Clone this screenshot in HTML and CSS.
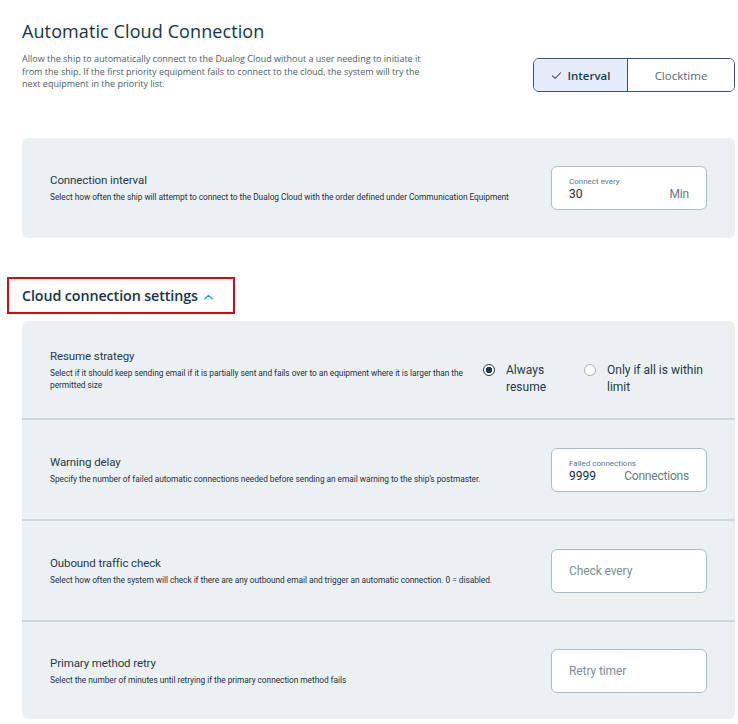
FILE: index.html
```html
<!DOCTYPE html>
<html lang="en">
<head>
<meta charset="utf-8">
<link rel="stylesheet" href="styles.css">
</head>
<body>
<div class="page">
  <header class="intro">
    <div class="intro-text">
      <h1 class="title">Automatic Cloud Connection</h1>
      <p class="lead">Allow the ship to automatically connect to the Dualog Cloud without a user needing to initiate it from the ship. If the first priority equipment fails to connect to the cloud, the system will try the next equipment in the priority list.</p>
    </div>
    <div class="toggle">
      <button class="seg seg-active">
        <svg class="check" viewBox="0 0 12 12" width="11" height="11"><path d="M1.5 6.3 L4.6 9.2 L10.5 3" fill="none" stroke="#2d4a5c" stroke-width="1.1" stroke-linecap="round" stroke-linejoin="round"/></svg>
        Interval
      </button>
      <button class="seg">Clocktime</button>
    </div>
  </header>

  <section class="panel">
    <div class="row">
      <div class="row-text">
        <div class="row-title">Connection interval</div>
        <div class="row-desc">Select how often the ship will attempt to connect to the Dualog Cloud with the order defined under Communication Equipment</div>
      </div>
      <div class="field">
        <div class="field-label">Connect every</div>
        <div class="field-line"><span class="field-value">30</span><span class="field-unit">Min</span></div>
      </div>
    </div>
  </section>

  <div class="section-head">
    <h2 class="section-title">Cloud connection settings</h2>
    <svg class="chev" viewBox="0 0 10 6" width="9" height="6"><path d="M1 5 L5 1.2 L9 5" fill="none" stroke="#1aa39a" stroke-width="1.4" stroke-linecap="round" stroke-linejoin="round"/></svg>
  </div>

  <section class="panel panel-list">
    <div class="row">
      <div class="row-text narrow">
        <div class="row-title">Resume strategy</div>
        <div class="row-desc">Select if it should keep sending email if it is partially sent and fails over to an equipment where it is larger than the permitted size</div>
      </div>
      <div class="radios">
        <label class="radio"><span class="dot dot-on"></span><span class="radio-text">Always resume</span></label>
        <label class="radio radio-wide"><span class="dot"></span><span class="radio-text">Only if all is within limit</span></label>
      </div>
    </div>
    <div class="row">
      <div class="row-text">
        <div class="row-title">Warning delay</div>
        <div class="row-desc">Specify the number of failed automatic connections needed before sending an email warning to the ship’s postmaster.</div>
      </div>
      <div class="field">
        <div class="field-label">Failed connections</div>
        <div class="field-line"><span class="field-value">9999</span><span class="field-unit">Connections</span></div>
      </div>
    </div>
    <div class="row">
      <div class="row-text">
        <div class="row-title">Oubound traffic check</div>
        <div class="row-desc">Select how often the system will check if there are any outbound email and trigger an automatic connection. 0 = disabled.</div>
      </div>
      <div class="field field-empty"><span class="placeholder">Check every</span></div>
    </div>
    <div class="row">
      <div class="row-text">
        <div class="row-title">Primary method retry</div>
        <div class="row-desc">Select the number of minutes until retrying if the primary connection method fails</div>
      </div>
      <div class="field field-empty"><span class="placeholder">Retry timer</span></div>
    </div>
  </section>
</div>
</body>
</html>
```

FILE: styles.css
```css
* { box-sizing: border-box; }
html, body { margin: 0; padding: 0; background: #ffffff; }
body { font-family: Roboto, "Liberation Sans", sans-serif; color: #1e3a4a; }

.page { padding: 0 3px 0 22px; }

.intro { display: flex; justify-content: space-between; align-items: flex-start; padding-top: 19px; }
.intro-text { width: 406px; }
.title { margin: 0; font-family: "Open Sans", sans-serif; font-weight: 400; font-size: 18px; line-height: 24px; color: #163447; letter-spacing: 0.1px; }
.lead { margin: 10px 0 0; font-family: "Open Sans", sans-serif; font-size: 9px; line-height: 12.5px; color: #4b5b66; }

.toggle { display: flex; margin-top: 39px; border: 1px solid #34566a; border-radius: 6px; overflow: hidden; height: 34px; width: 202px; }
.seg { border: 0; margin: 0; background: #fff; font-family: "Open Sans", sans-serif; font-size: 11.5px; color: #52697a; display: flex; align-items: center; justify-content: center; gap: 6px; padding: 0; }
.seg-active { width: 94px; background: #e5ecf9; color: #1d3a4c; font-weight: 600; border-right: 1px solid #34566a; }
.seg:last-child { flex: 1; }
.check { display: block; }

.panel { background: #ebf0f3; border-radius: 6px; margin-top: 46px; }
.row { display: flex; align-items: center; justify-content: space-between; height: 100px; padding: 0 28px; }
.panel-list { margin-top: 7px; height: 398px; }
.panel-list .row { height: 101px; border-bottom: 2px solid #cdd7dc; }
.panel-list .row:first-child { height: 99px; }
.panel-list .row:last-child { border-bottom: 0; height: 97px; }

.row-text { max-width: 480px; }
.row-text.narrow { max-width: 425px; }
.row-title { font-size: 11.5px; line-height: 14px; color: #1e3a4a; letter-spacing: -0.1px; }
.row-desc { margin-top: 4px; font-size: 8.35px; line-height: 12px; color: #1e3140; letter-spacing: -0.05px; }

.field { width: 156px; height: 44px; background: #fff; border: 1.5px solid #a9bcc7; border-radius: 6px; padding: 9px 17px 0 17px; }
.field-label { font-size: 8px; line-height: 11px; color: #5b7385; }
.field-line { display: flex; justify-content: space-between; align-items: baseline; margin-top: 0px; }
.field-value { font-size: 12px; line-height: 15px; color: #142c3c; }
.field-unit { font-size: 12px; line-height: 15px; color: #63798a; letter-spacing: -0.2px; }
.field-empty { display: flex; align-items: center; padding-top: 0; }
.placeholder { font-size: 12px; color: #7a8d99; letter-spacing: -0.1px; }

.section-head { display: inline-flex; align-items: center; gap: 6px; margin: 39px 0 0 -15px; padding: 0 13px; height: 37px; width: 228px; border: 2px solid #e8000d; }
.section-title { margin: 0; font-family: "Open Sans", sans-serif; font-weight: 600; font-size: 14.3px; color: #163447; letter-spacing: -0.1px; }
.chev { display: block; margin-top: 2px; }

.radios { display: flex; width: 224px; margin-top: 18px; }
.radio { display: flex; align-items: flex-start; gap: 11px; width: 101px; }
.radio-wide { width: 123px; }
.radio-text { font-size: 12px; line-height: 17px; color: #1e3a4a; }
.radio .radio-text { max-width: 80px; }
.radio-wide .radio-text { max-width: 102px; }
.dot { flex: none; width: 12px; height: 12px; border-radius: 50%; border: 1px solid #a3b1ba; background: #fff; margin-top: 2px; }
.dot-on { border: 1.3px solid #1e3a4a; background: radial-gradient(circle, #1e3a4a 0 3px, #fff 3.5px); }
```
